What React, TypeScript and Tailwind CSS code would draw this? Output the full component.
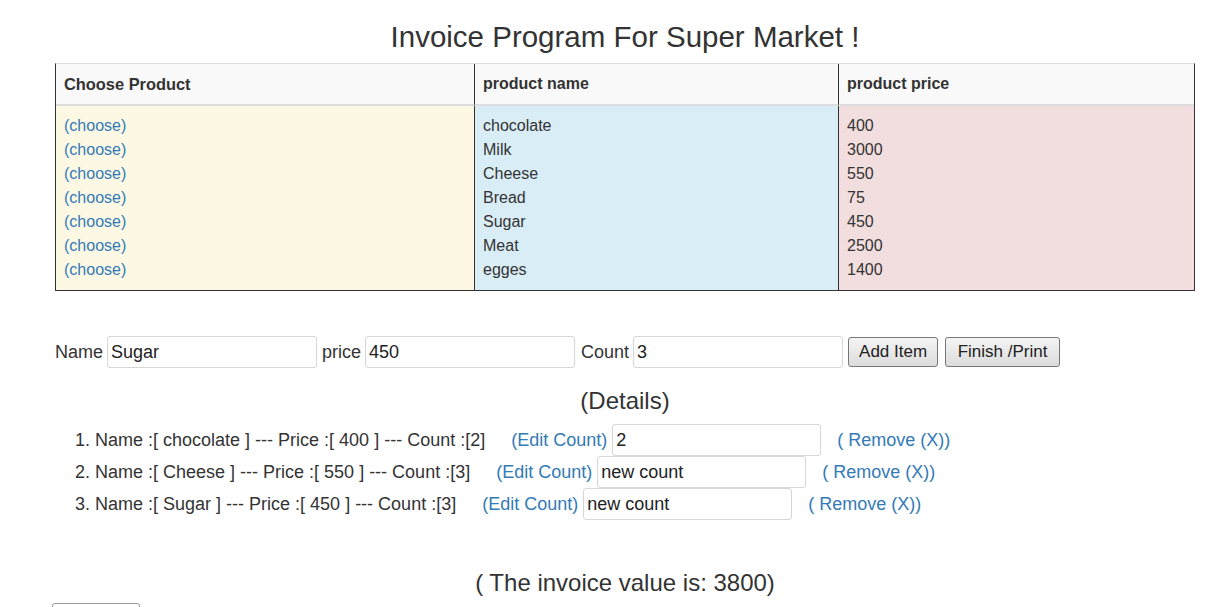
const products = [
  { name: 'chocolate', price: 400 },
  { name: 'Milk', price: 3000 },
  { name: 'Cheese', price: 550 },
  { name: 'Bread', price: 75 },
  { name: 'Sugar', price: 450 },
  { name: 'Meat', price: 2500 },
  { name: 'egges', price: 1400 },
];

const items = [
  { name: 'chocolate', price: 400, count: 2, value: '2' },
  { name: 'Cheese', price: 550, count: 3, value: 'new count' },
  { name: 'Sugar', price: 450, count: 3, value: 'new count' },
];

const input =
  'h-[32px] border border-[#d6d6d6] rounded-[3px] px-[3px] text-[18px] text-[#222] bg-white outline-none';
const button =
  'h-[30px] border border-[#777] rounded-[3px] bg-gradient-to-b from-[#f4f4f4] to-[#dcdcdc] text-[17px] text-[#222]';

export default function App() {
  return (
    <div className="w-[1220px] h-[607px] overflow-hidden bg-white text-[#333] text-[16px] leading-[24px] font-['Liberation_Sans',Arial,sans-serif]">
      <div className="w-[1140px] ml-[55px]">
        <h1 className="mt-[20px] mb-[10px] text-center text-[29.5px] leading-[33px] text-[#333]">
          Invoice Program For Super Market !
        </h1>

        <div className="grid grid-cols-[418px_364px_1fr] border-t border-t-[#ddd] border-l border-r border-b border-[#333]">
          <div className="bg-[#f9f9f9] border-b-2 border-[#ddd] px-[8px] py-[8px] font-bold text-[16.4px]">Choose Product</div>
          <div className="bg-[#f9f9f9] border-b-2 border-b-[#ddd] border-l border-l-[#333] px-[8px] py-[8px] font-bold">product name</div>
          <div className="bg-[#f9f9f9] border-b-2 border-b-[#ddd] border-l border-l-[#333] px-[8px] py-[8px] font-bold">product price</div>

          <div className="bg-[#fcf8e3] px-[8px] py-[8px]">
            {products.map(p => (
              <div key={p.name}>
                <a className="text-[#337ab7]">(choose)</a>
              </div>
            ))}
          </div>
          <div className="bg-[#d9edf7] border-l border-[#333] px-[8px] py-[8px]">
            {products.map(p => (
              <div key={p.name}>{p.name}</div>
            ))}
          </div>
          <div className="bg-[#f2dede] border-l border-[#333] px-[8px] py-[8px]">
            {products.map(p => (
              <div key={p.name}>{p.price}</div>
            ))}
          </div>
        </div>

        <div className="mt-[45px] flex items-center h-[32px] text-[18px]">
          <span>Name</span>
          <input className={input + ' ml-[4px] w-[210px]'} defaultValue="Sugar" />
          <span className="ml-[5px]">price</span>
          <input className={input + ' ml-[4px] w-[210px]'} defaultValue="450" />
          <span className="ml-[6px]">Count</span>
          <input className={input + ' ml-[4px] w-[210px]'} defaultValue="3" />
          <button className={button + ' ml-[5px] w-[90px]'}>Add Item</button>
          <button className={button + ' ml-[7px] w-[115px]'}>Finish /Print</button>
        </div>

        <h3 className="mt-[20px] mb-[10px] text-center text-[24px] leading-[26px]">(Details)</h3>

        <div className="text-[18px]">
          {items.map((it, i) => (
            <div key={it.name} className="h-[32px] flex items-center">
              <span className="w-[40px] pr-[5px] text-right">{i + 1}.</span>
              <span>
                Name :[ {it.name} ] --- Price :[ {it.price} ] --- Count :[{it.count}]
              </span>
              <a className="ml-[26px] text-[#337ab7]">(Edit Count)</a>
              <input className={input + ' ml-[5px] w-[209px]'} defaultValue={it.value} />
              <a className="ml-[16px] text-[#337ab7]">( Remove (X))</a>
            </div>
          ))}
        </div>

        <h3 className="mt-[50px] text-center text-[24px] leading-[26px]">( The invoice value is: 3800)</h3>

        <button className="mt-[7px] -ml-[3px] w-[88px] h-[30px] border border-[#999] rounded-[3px] bg-white"></button>
      </div>
    </div>
  );
}
